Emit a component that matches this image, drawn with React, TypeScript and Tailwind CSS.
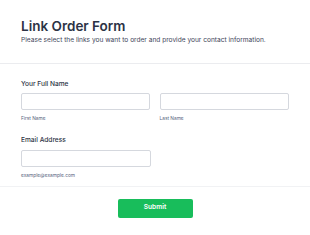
export default function App() {
  return (
    <div className="w-[310px] h-[235px] bg-white overflow-hidden" style={{ fontFamily: "Inter, 'Noto Sans', sans-serif" }}>
      <div className="px-[21px] pt-[18px] pb-[18px] border-b border-[#ebecef]">
        <h1 className="text-[13.5px] leading-[16px] font-semibold text-[#2c3345]">Link Order Form</h1>
        <p className="mt-[1.5px] text-[6.6px] leading-[9px] text-[#3e4459]">Please select the links you want to order and provide your contact information.</p>
      </div>
      <div className="px-[21px] pt-[16px] border-b border-[#f1f2f4] pb-[7px]">
        <div className="text-[6.6px] leading-[9px] font-medium text-[#2c3345]">Your Full Name</div>
        <div className="mt-[4px] flex gap-[10px]">
          <div className="w-[130px]">
            <div className="h-[17px] rounded-[2px] border border-[#d5d8de] bg-white" />
            <div className="mt-[5px] text-[4.8px] leading-[7px] text-[#57647e]">First Name</div>
          </div>
          <div className="w-[131px]">
            <div className="h-[17px] rounded-[2px] border border-[#d5d8de] bg-white" />
            <div className="mt-[5px] text-[4.8px] leading-[7px] text-[#57647e]">Last Name</div>
          </div>
        </div>
        <div className="mt-[14px] text-[6.6px] leading-[9px] font-medium text-[#2c3345]">Email Address</div>
        <div className="mt-[5px] w-[130px]">
          <div className="h-[17px] rounded-[2px] border border-[#d5d8de] bg-white" />
          <div className="mt-[5px] text-[4.8px] leading-[7px] text-[#57647e]">example@example.com</div>
        </div>
      </div>
      <div className="flex justify-center pt-[12px]">
        <button className="w-[75px] h-[19px] rounded-[2px] bg-[#18bd5b] text-white text-[6.6px] font-semibold">Submit</button>
      </div>
    </div>
  );
}
